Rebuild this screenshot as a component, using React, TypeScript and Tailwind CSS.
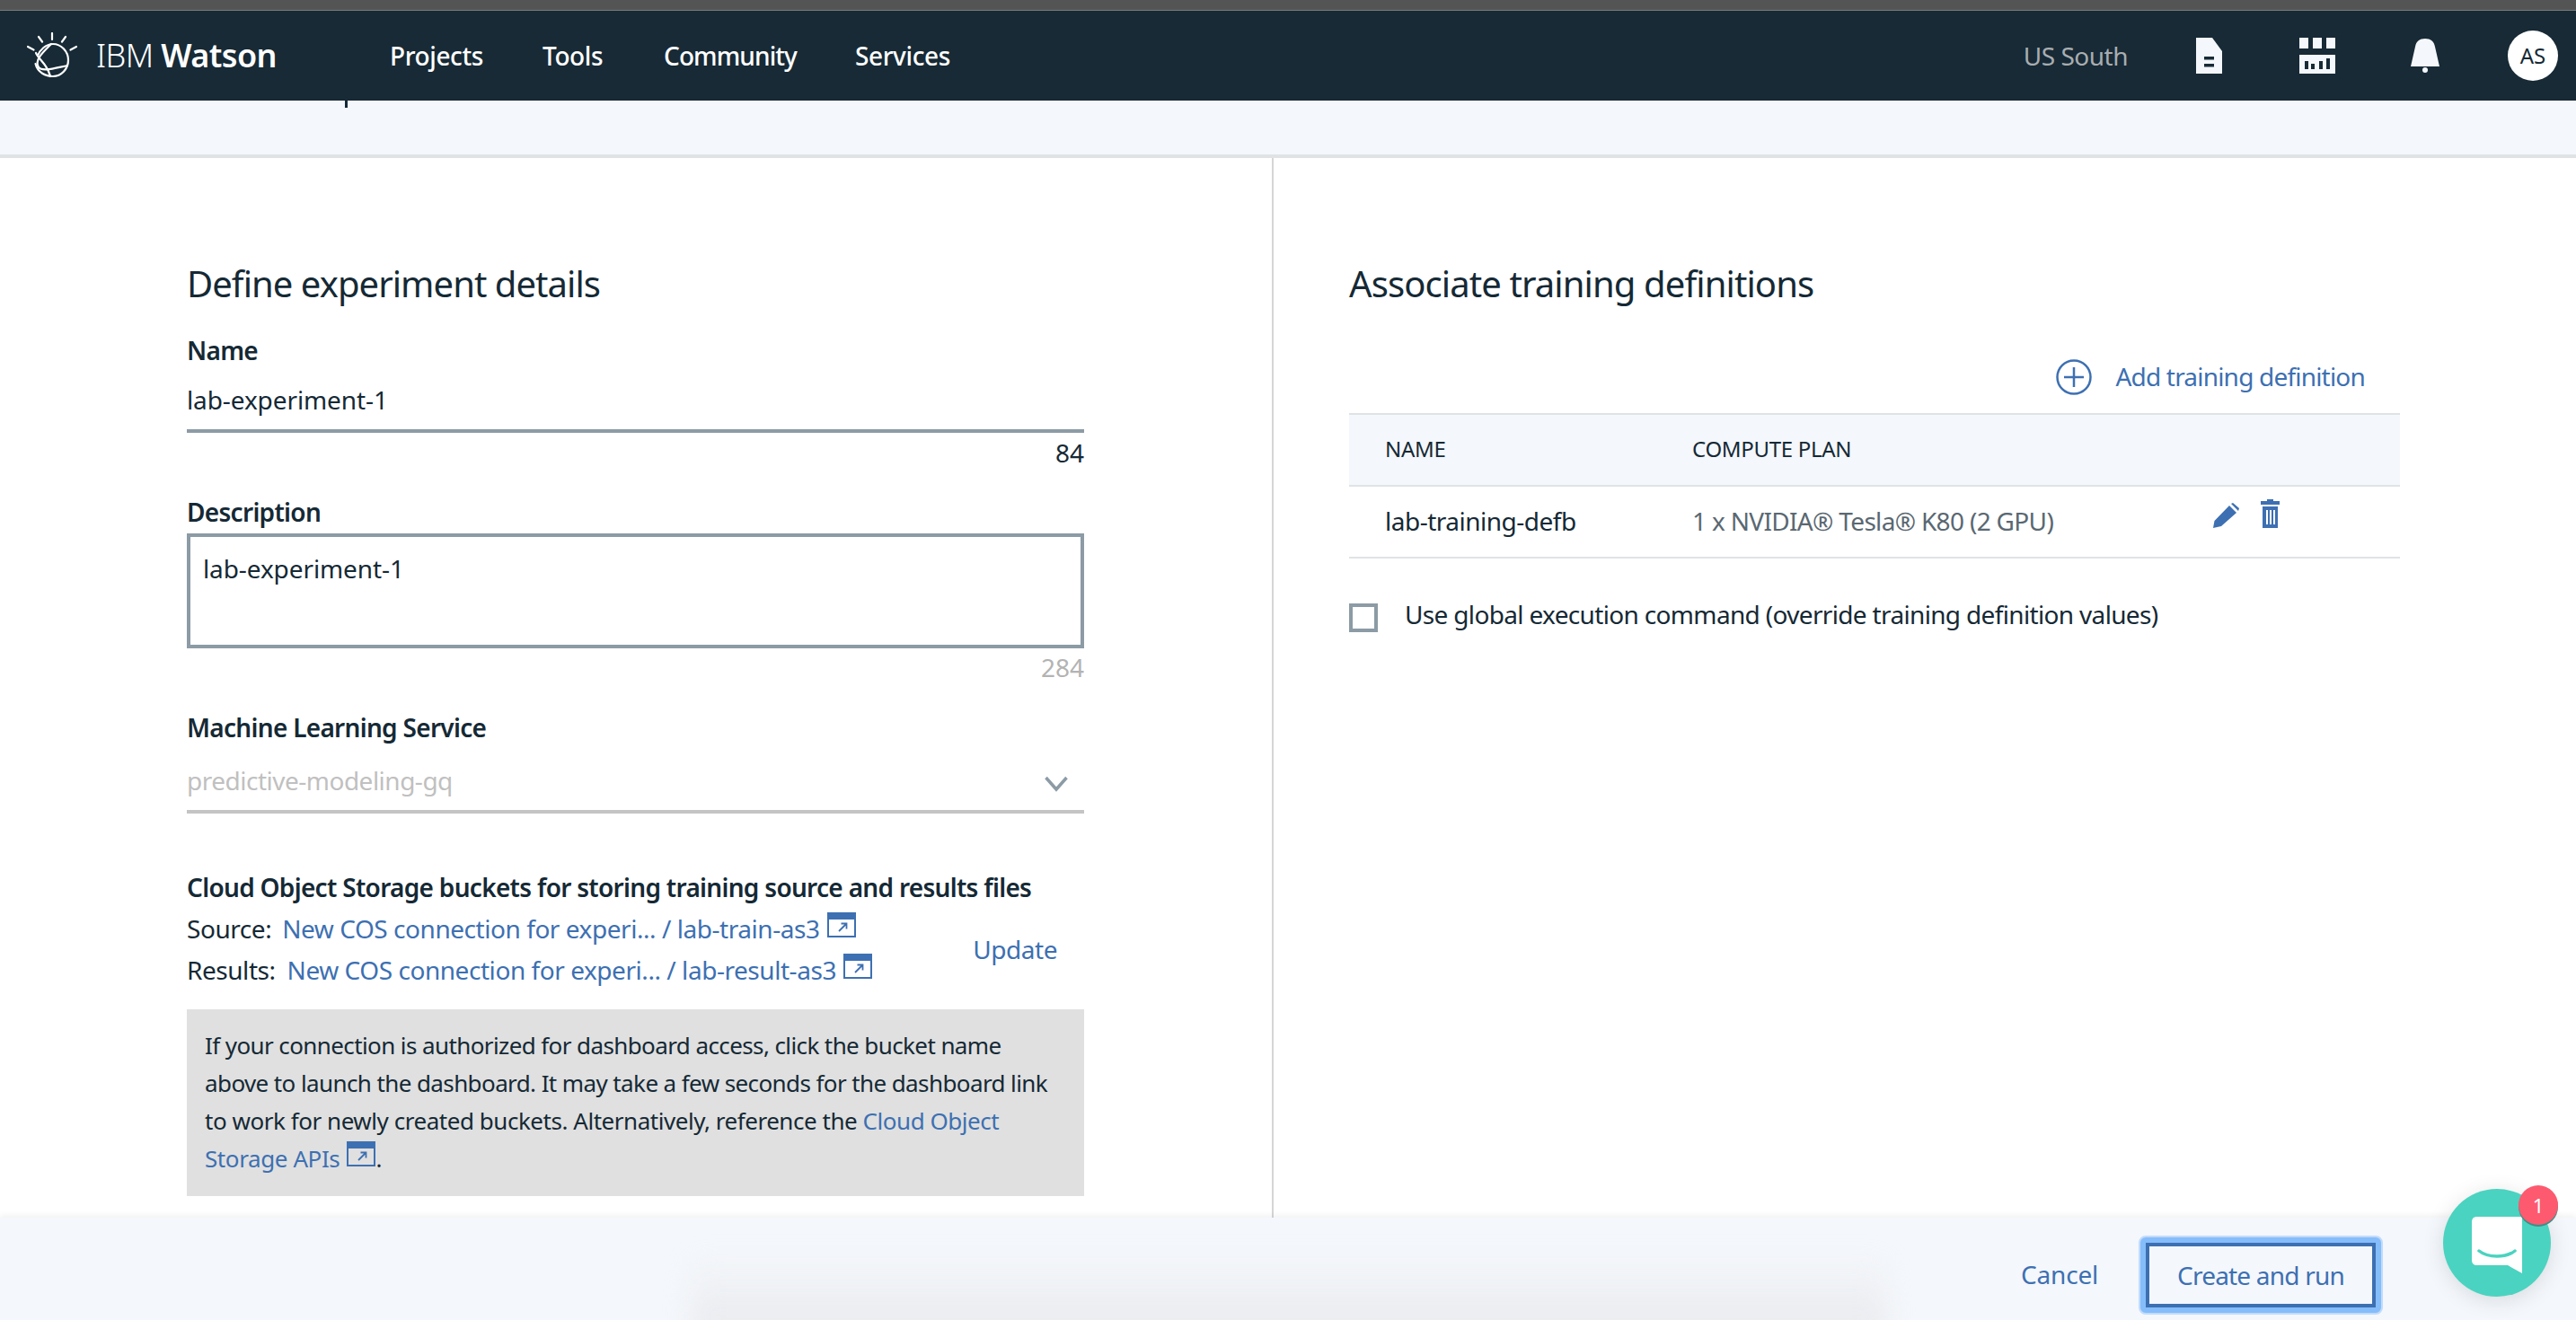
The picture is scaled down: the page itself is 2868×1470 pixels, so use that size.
import React from "react";

const External = () => (
  <svg viewBox="0 0 32 28" className="inline-block w-[32px] h-[28px] ml-[8px] align-[1px]">
    <rect x="0" y="0" width="32" height="8" fill="#3d70b2" />
    <path d="M1 8V27H31V8" fill="none" stroke="#3d70b2" strokeWidth="2" />
    <path d="M13 21L21 13M15.5 12.5H21.5V18.5" fill="none" stroke="#3d70b2" strokeWidth="1.8" />
  </svg>
);

const Logo = () => (
  <svg viewBox="0 0 56 52" className="w-[56px] h-[52px] shrink-0" fill="none" stroke="#fff" strokeWidth="2.2" strokeLinecap="round">
    <path d="M28 1V8M13 5L17 10.5M43 5L39 10.5M1 16L7.5 19.5M55 16L48.5 19.5" />
    <path d="M12 26C14 20 21 13 29 13C38 13 46 21 46 31C46 41 38 49 29 49C21 49 12 45 9.500 35" />
    <path d="M27 13C17 23 8 31 13 39C17 44 30 40 45 37" />
    <path d="M10 23C13 29 18 33 21 38C24 42 25 46 26 49" />
  </svg>
);

const NavLink = ({ children, w }: { children: React.ReactNode; w: string }) => (
  <a className={`${w} text-[28px] font-medium text-white tracking-[-0.4px]`}>{children}</a>
);

const Label = ({ children }: { children: React.ReactNode }) => (
  <div className="h-[36px] leading-[36px] text-[28px] font-semibold text-[#152935] tracking-[-0.7px]">{children}</div>
);

export default function App() {
  return (
    <div
      className="relative w-[2868px] h-[1470px] overflow-hidden flex flex-col bg-white text-[#152935]"
      style={{ fontFamily: '"Noto Sans", Arial, sans-serif' }}
    >
      <div className="h-[12px] shrink-0 bg-[#545454] border-b border-[#7a7a7a]" />

      <header className="h-[100px] shrink-0 bg-[#172a36] flex items-center pl-[30px] pr-[20px]">
        <Logo />
        <div className="ml-[21px] w-[327px] text-[36px] leading-none text-white whitespace-nowrap tracking-[-0.6px]">
          <span className="font-light">IBM</span> <span className="font-semibold">Watson</span>
        </div>
        <nav className="flex items-center">
          <NavLink w="w-[170px]">Projects</NavLink>
          <NavLink w="w-[135px]">Tools</NavLink>
          <a className="w-[213px] text-[28px] font-medium text-white tracking-[-0.9px]">Community</a>
          <NavLink w="w-[130px]">Services</NavLink>
        </nav>
        <div className="ml-auto flex items-center">
          <span className="text-[28px] text-[#a9adb0] mr-[76px] tracking-[-0.5px]">US South</span>
          <svg viewBox="0 0 29 40" className="w-[29px] h-[40px] mr-[86px]">
            <path d="M0 0H18L29 15V40H0Z" fill="#f4f7fb" />
            <path d="M9 21H20V24.500H9ZM9 29H20V32.500H9Z" fill="#172a36" />
          </svg>
          <svg viewBox="0 0 40 40" className="w-[40px] h-[40px] mr-[84px]">
            <path d="M0 0H10V12H0ZM15 0H25V12H15ZM30 0H40V12H30ZM0 19H40V40H0Z" fill="#f4f7fb" />
            <path d="M6 26H10V35H6ZM13 29H17V35H13ZM22 26H26V35H22ZM30 23H34V35H30Z" fill="#172a36" />
          </svg>
          <svg viewBox="0 0 32 38" className="w-[32px] h-[38px] mr-[76px]">
            <path d="M0 31L5 9C6 3 10 0 16 0C22 0 26 3 27 9L32 31Z" fill="#f4f7fb" />
            <circle cx="16" cy="35" r="3" fill="#f4f7fb" />
          </svg>
          <div className="w-[56px] h-[56px] rounded-full bg-white flex items-center justify-center text-[24px] text-[#152935]">AS</div>
        </div>
      </header>

      <div className="relative h-[64px] shrink-0 bg-[#f4f7fb] border-b-4 border-[#dfe3e6]">
        <div className="absolute left-[384px] top-0 w-[3px] h-[8px] bg-[#152935]" />
      </div>

      <main className="flex-1 min-h-0 flex">
        <section className="w-[1418px] border-r-2 border-[#d4d6d8] pl-[208px] pr-[209px] pt-[116px] overflow-hidden">
          <h2 className="h-[48px] leading-[48px] text-[40px] font-normal tracking-[-0.95px]">Define experiment details</h2>

          <div className="mt-[32px]"><Label>Name</Label></div>
          <div className="mt-[20px] h-[54px] border-b-4 border-[#8c9ba5] text-[28px] leading-[34px] tracking-[-0.1px]">lab-experiment-1</div>
          <div className="mt-[4px] h-[36px] leading-[36px] text-[28px] text-right">84</div>

          <div className="mt-[30px]"><Label>Description</Label></div>
          <div className="mt-[6px] h-[128px] border-4 border-[#8c9ba5] pl-[14px] pt-[18px] text-[28px] leading-[34px] tracking-[-0.1px]">lab-experiment-1</div>
          <div className="mt-[4px] h-[36px] leading-[34px] text-[28px] text-right text-[#b3b3b3]">284</div>

          <div className="mt-[30px]"><Label>Machine Learning Service</Label></div>
          <div className="mt-[24px] h-[54px] border-b-4 border-[#c4c4c4] flex justify-between pr-[18px] text-[28px] leading-[34px] text-[#c0c0c0] tracking-[-0.5px]">
            <span>predictive-modeling-gq</span>
            <svg viewBox="0 0 26 18" className="w-[26px] h-[18px] mt-[12px]" fill="none" stroke="#8c9ba5" strokeWidth="3.500">
              <path d="M1.500 2L13 15L24.500 2" />
            </svg>
          </div>

          <div className="mt-[64px]"><Label>Cloud Object Storage buckets for storing training source and results files</Label></div>
          <div className="mt-[5px] flex items-center justify-between pr-[30px] text-[28px] leading-[46px] whitespace-nowrap tracking-[-0.45px]">
            <div>
              <div>Source:<a className="ml-[12px] text-[#3d70b2]">New COS connection for experi... / lab-train-as3</a><External /></div>
              <div>Results:<a className="ml-[13px] text-[#3d70b2]">New COS connection for experi... / lab-result-as3</a><External /></div>
            </div>
            <a className="text-[#3d70b2]">Update</a>
          </div>

          <div className="mt-[21px] h-[208px] bg-[#e0e0e0] pl-[20px] pt-[19px] text-[26px] leading-[42px] whitespace-nowrap tracking-[-0.6px]">
            If your connection is authorized for dashboard access, click the bucket name<br />
            above to launch the dashboard. It may take a few seconds for the dashboard link<br />
            <span className="tracking-[-0.46px]">to work for newly created buckets. Alternatively, reference the <a className="text-[#3d70b2]">Cloud Object</a></span><br />
            <a className="text-[#3d70b2] tracking-[-0.4px]">Storage APIs</a><External />.
          </div>
        </section>

        <section className="flex-1 pl-[84px] pr-[196px] pt-[116px]">
          <h2 className="h-[48px] leading-[48px] text-[40px] font-normal tracking-[-0.9px]">Associate training definitions</h2>

          <div className="mt-[60px] h-[40px] flex items-center justify-end pr-[39px] text-[28px] text-[#3d70b2] tracking-[-0.8px]">
            <svg viewBox="0 0 40 40" className="w-[40px] h-[40px] mr-[26px]" fill="none" stroke="#3d70b2" strokeWidth="2.500">
              <circle cx="20" cy="20" r="18.500" />
              <path d="M20 9V31M9 20H31" />
            </svg>
            <span className="pb-[3px]">Add training definition</span>
          </div>

          <div className="mt-[20px] h-[82px] border-y-2 border-[#dfe3e6] bg-[#f4f7fb] flex items-center text-[24px] tracking-[-0.3px]">
            <span className="pl-[40px] w-[382px] pb-[2px]">NAME</span>
            <span className="pb-[2px]">COMPUTE PLAN</span>
          </div>
          <div className="h-[80px] border-b-2 border-[#dfe3e6] flex items-center text-[28px] tracking-[-0.5px]">
            <span className="pl-[40px] w-[382px] pb-[2px]">lab-training-defb</span>
            <span className="w-[580px] pb-[2px] text-[#5a6872] tracking-[-0.67px]">1 x NVIDIA® Tesla® K80 (2 GPU)</span>
            <svg viewBox="0 0 29 28" className="w-[29px] h-[28px] self-start mt-[18px]">
              <path d="M0 28L1.500 20L18 3L26 11L9 26ZM20 1L22 0L29 6L28 9Z" fill="#3d70b2" />
            </svg>
            <svg viewBox="0 0 21 32" className="w-[21px] h-[32px] ml-[24px] self-start mt-[14px]">
              <path d="M7 0H14V2H21V6H0V2H7ZM2 8H19V32H2ZM6 12V28H8V12ZM10 12V28H12V12ZM14 12V28H16V12Z" fill="#3d70b2" fillRule="evenodd" />
            </svg>
          </div>

          <div className="mt-[45px] flex items-start text-[28px] leading-[34px] tracking-[-0.66px]">
            <span className="w-[32px] h-[32px] border-4 border-[#8c9ba5] mr-[30px] mt-[5px]" />
            Use global execution command (override training definition values)
          </div>
        </section>
      </main>

      <footer className="relative z-10 h-[114px] shrink-0 bg-[#f4f7fb] shadow-[0_-3px_6px_rgba(0,0,0,0.05)] flex justify-end pr-[215px] pt-[20px]">
        <div className="absolute left-[770px] top-[41px] w-[1330px] h-[90px] bg-linear-to-b from-transparent to-[#e8e9ed] blur-[14px]" />
        <a className="relative mr-[45px] h-[88px] leading-[86px] text-[28px] text-[#3d70b2] tracking-[-0.2px]">Cancel</a>
        <div className="relative h-[88px] w-[272px] rounded-[8px] border-2 border-[#c1dbfb] bg-[#85bcfa] p-[6px]">
          <button className="w-full h-full border-4 border-[#3d70b2] bg-[#f4f7fb] text-[28px] text-[#3d70b2] tracking-[-0.8px]">Create and run</button>
        </div>
      </footer>

      <div className="absolute z-20 left-[2720px] top-[1324px] w-[120px] h-[120px] rounded-full bg-[#4ad3c0] shadow-[0_4px_24px_rgba(0,0,0,0.12)] flex items-center justify-center">
        <svg viewBox="0 0 56 63" className="w-[56px] h-[63px] mt-[4px]">
          <path d="M6 0H56V63L40 54H6C2 54 0 52 0 48V6C0 2 2 0 6 0Z" fill="#fff" />
          <path d="M8 38C18 46 38 46 48 38" fill="none" stroke="#4ad3c0" strokeWidth="3.500" strokeLinecap="round" />
        </svg>
      </div>
      <div className="absolute z-30 left-[2804px] top-[1320px] w-[44px] h-[44px] rounded-full bg-[#fd5a70] shadow-[0_2px_0_#3a8f88] text-white text-[22px] flex items-center justify-center">1</div>
    </div>
  );
}
